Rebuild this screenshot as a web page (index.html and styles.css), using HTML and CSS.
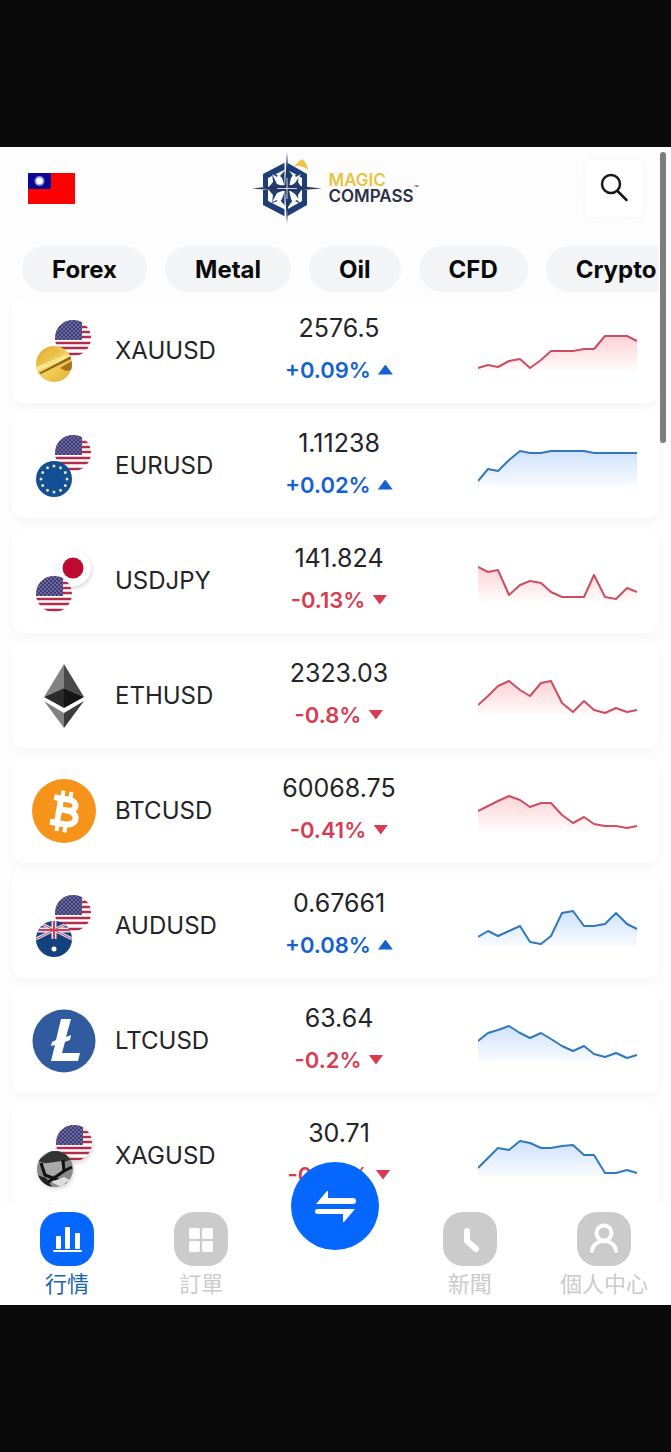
FILE: index.html
```html
<!DOCTYPE html>
<html lang="zh-Hant">
<head>
  <meta charset="UTF-8">
  <meta name="viewport" content="width=device-width, initial-scale=1">
  <title>Magic Compass</title>
  <link rel="stylesheet" href="styles.css">
</head>
<body>

  <!-- Shared icons -->
  <svg class="sprite" aria-hidden="true">
    <defs>
      <linearGradient id="fillRed" gradientUnits="userSpaceOnUse" x1="0" y1="12" x2="0" y2="50">
        <stop offset="0" stop-color="#f5455c" stop-opacity="0.26"/>
        <stop offset="1" stop-color="#f5455c" stop-opacity="0.02"/>
      </linearGradient>
      <linearGradient id="fillBlue" gradientUnits="userSpaceOnUse" x1="0" y1="12" x2="0" y2="50">
        <stop offset="0" stop-color="#2b7df0" stop-opacity="0.24"/>
        <stop offset="1" stop-color="#2b7df0" stop-opacity="0.03"/>
      </linearGradient>
      <linearGradient id="gold" x1="0" y1="0" x2="1" y2="1">
        <stop offset="0" stop-color="#dba52c"/>
        <stop offset="0.5" stop-color="#f3cf5c"/>
        <stop offset="1" stop-color="#e3ac30"/>
      </linearGradient>
      <clipPath id="round"><circle cx="18" cy="18" r="18"/></clipPath>
      <pattern id="stars" width="4" height="4" patternUnits="userSpaceOnUse">
        <rect width="4" height="4" fill="#3f3b78"/>
        <circle cx="1" cy="1" r="0.7" fill="#b9b7d6"/>
        <circle cx="3" cy="3" r="0.7" fill="#b9b7d6"/>
      </pattern>
    </defs>
    <symbol id="us" viewBox="0 0 36 36">
      <g clip-path="url(#round)">
        <rect width="36" height="36" fill="#fff"/>
        <path d="M0 2h36M0 7h36M0 12h36M0 17h36M0 23h36M0 28h36M0 34h36" stroke="#b32c4b" stroke-width="2.500"/>
        <rect width="27" height="20" fill="url(#stars)"/>
      </g>
    </symbol>
    <symbol id="eu" viewBox="0 0 36 36">
      <circle cx="18" cy="18" r="18" fill="#134f96"/>
      <g fill="#e6e3a0">
        <circle cx="18" cy="5" r="1.5"/><circle cx="24.5" cy="6.7" r="1.5"/><circle cx="29.3" cy="11.5" r="1.5"/>
        <circle cx="31" cy="18" r="1.5"/><circle cx="29.3" cy="24.5" r="1.5"/><circle cx="24.5" cy="29.3" r="1.5"/>
        <circle cx="18" cy="31" r="1.5"/><circle cx="11.5" cy="29.3" r="1.5"/><circle cx="6.7" cy="24.5" r="1.5"/>
        <circle cx="5" cy="18" r="1.5"/><circle cx="6.7" cy="11.5" r="1.5"/><circle cx="11.5" cy="6.7" r="1.5"/>
      </g>
    </symbol>
    <symbol id="jp" viewBox="0 0 36 36">
      <circle cx="18" cy="18" r="18" fill="#fff"/>
      <circle cx="18" cy="18" r="10.5" fill="#bd0a30"/>
    </symbol>
    <symbol id="au" viewBox="0 0 36 36">
      <g clip-path="url(#round)">
        <rect width="36" height="36" fill="#14427e"/>
        <path d="M0 0l36 18M36 0L0 18" stroke="#e9e4ee" stroke-width="3"/>
        <path d="M18 0v18M0 9h36" stroke="#e9e4ee" stroke-width="5"/>
        <path d="M0 0l36 18M36 0L0 18" stroke="#c8405c" stroke-width="1"/>
        <path d="M18 0v18M0 9h36" stroke="#c8405c" stroke-width="2"/>
        <circle cx="18" cy="28" r="2.500" fill="#fff"/>
      </g>
    </symbol>
    <symbol id="xau" viewBox="0 0 36 36">
      <g clip-path="url(#round)">
        <rect width="36" height="36" fill="url(#gold)"/>
        <path d="M0 21L36 6v4L0 26z" fill="#fbe58d"/>
        <path d="M3 27L35 10v3L5 28z" fill="#8f6714"/>
        <path d="M24 22l12-7v9l-6 1z" fill="#a4731a"/>
        <path d="M6 8l14-6 4 4-15 7z" fill="#e9bd48"/>
      </g>
    </symbol>
    <symbol id="xag" viewBox="0 0 36 36">
      <g clip-path="url(#round)">
        <rect width="36" height="36" fill="#8a8a8a"/>
        <path d="M0 10L14 0h16l6 8-9 3-19 1z" fill="#333"/>
        <path d="M6 13l18-3 2 12-17 4z" fill="#a9a9a9"/>
        <path d="M4 12l4 12 26 10M26 9l1 11-17 12M27 20l8-4" stroke="#111" stroke-width="3" fill="none"/>
        <path d="M14 31l13-5 6 3-9 7z" fill="#dcdcdc"/>
        <path d="M0 24l9 3 6 9H2z" fill="#222"/>
      </g>
    </symbol>
  </svg>

  <div class="app">

    <header class="header">
      <button class="lang" type="button" aria-label="Language">
        <svg width="47" height="31" viewBox="0 0 47 31">
          <rect width="47" height="31" fill="#fe0000"/>
          <rect width="23" height="16" fill="#0a0794"/>
          <circle cx="11.500" cy="8" r="5" fill="#8f8fdc"/>
          <circle cx="11.500" cy="8" r="3.300" fill="#fff"/>
        </svg>
      </button>

      <a class="brand" href="#" aria-label="Magic Compass">
        <svg width="70" height="72" viewBox="0 0 70 72">
          <path d="M34 10L11 22v31l23 12 21-12V22z" fill="#1f3d77"/>
          <path d="M34 17L16 26v23l18 9 16-9V26z" fill="#fff"/>
          <g fill="#1f3d77">
            <path d="M35 36H16l5-6-1-9 8 3 6-7z"/>
            <path d="M35 36h15l-4-6 1-8-6 2-5-7z"/>
            <path d="M35 37H16l5 6-1 8 8-3 6 7z"/>
            <path d="M35 37h15l-4 6 1 8-6-3-5 7z"/>
          </g>
          <path d="M33 35l-8-3-5-10 5 3 1-3 4 4zM37 35l6-4 6-9-5 3-2-3-3 4zM33 38l-8 3-5 9 5-2 1 4 4-5zM37 38l6 4 6 8-5-2-2 4-3-5z" fill="#fff"/>
          <path d="M34 8v57M8 36.500h54" stroke="#fff" stroke-width="3"/>
          <path d="M35 0l2 33 33 3.500L37 39l-2 33-2-33-33-2.500L33 33z" fill="#24365f"/>
          <path d="M35 26v21M25 36.500h20" stroke="#fff" stroke-width="0.800"/>
          <path d="M42 14l8-7q5 4 6 11-6-5-14-4z" fill="#f0c243"/>
        </svg>
        <span class="brand-name">
          <span class="brand-magic">MAGIC</span>
          <span class="brand-compass">COMPASS</span>
        </span>
        <span class="tm">™</span>
      </a>

      <button class="search" type="button" aria-label="Search">
        <svg width="30" height="30" viewBox="0 0 30 30" fill="none" stroke="#17181a" stroke-width="2.500" stroke-linecap="round">
          <circle cx="11" cy="11" r="9"/>
          <path d="M17.500 18l9 9"/>
        </svg>
      </button>
    </header>

    <nav class="chips">
      <button class="chip" type="button">Forex</button>
      <button class="chip" type="button">Metal</button>
      <button class="chip" type="button">Oil</button>
      <button class="chip" type="button">CFD</button>
      <button class="chip" type="button">Crypto</button>
    </nav>

    <!-- Quotes -->
    <ul class="quotes">
      <li class="quote up">
        <svg class="coin" viewBox="0 0 64 64">
          <use href="#us" x="23" y="1" width="36" height="36"/>
          <use href="#xau" x="4" y="27" width="36" height="36"/>
        </svg>
        <span class="symbol">XAUUSD</span>
        <div class="rate">
          <span class="price">2576.5</span>
          <span class="change">+0.09%</span>
        </div>
        <svg class="chart red" viewBox="0 0 160 60">
          <path d="M0 50V47L10 44 20 46 31 40 42 38 52 47 63 39 73 30H95L106 28H116L127 15H149L159 20V50z"/>
          <polyline points="0,47 10,44 20,46 31,40 42,38 52,47 63,39 73,30 84,30 95,30 106,28 116,28 127,15 138,15 149,15 159,20"/>
        </svg>
      </li>
      <li class="quote up">
        <svg class="coin" viewBox="0 0 64 64">
          <use href="#us" x="23" y="1" width="36" height="36"/>
          <use href="#eu" x="4" y="27" width="36" height="36"/>
        </svg>
        <span class="symbol">EURUSD</span>
        <div class="rate">
          <span class="price">1.11238</span>
          <span class="change">+0.02%</span>
        </div>
        <svg class="chart blue" viewBox="0 0 160 60">
          <path d="M0 50V45L10 33 20 35 31 24 42 15 52 17H63L73 15H106L116 17H159V50z"/>
          <polyline points="0,45 10,33 20,35 31,24 42,15 52,17 63,17 73,15 106,15 116,17 159,17"/>
        </svg>
      </li>
      <li class="quote down">
        <svg class="coin" viewBox="0 0 64 64">
          <use class="lifted" href="#jp" x="23" y="1" width="36" height="36"/>
          <use href="#us" x="4" y="27" width="36" height="36"/>
        </svg>
        <span class="symbol">USDJPY</span>
        <div class="rate">
          <span class="price">141.824</span>
          <span class="change">-0.13%</span>
        </div>
        <svg class="chart red" viewBox="0 0 160 60">
          <path d="M0 50V16L10 21 20 19 31 44 42 34 52 30 63 32 73 41 84 46H106L116 24 127 46 138 48 149 37 159 41V50z"/>
          <polyline points="0,16 10,21 20,19 31,44 42,34 52,30 63,32 73,41 84,46 106,46 116,24 127,46 138,48 149,37 159,41"/>
        </svg>
      </li>
      <li class="quote down">
        <svg class="coin" viewBox="0 0 64 64">
          <path d="M32 0L12 33l20-9z" fill="#828282"/>
          <path d="M32 0l20 33-20-9z" fill="#4a4a4a"/>
          <path d="M12 33l20-9v20z" fill="#2b2b2b"/>
          <path d="M52 33l-20-9v20z" fill="#151515"/>
          <path d="M12 37l20 12v15z" fill="#828282"/>
          <path d="M52 37L32 49v15z" fill="#3c3c3c"/>
        </svg>
        <span class="symbol">ETHUSD</span>
        <div class="rate">
          <span class="price">2323.03</span>
          <span class="change">-0.8%</span>
        </div>
        <svg class="chart red" viewBox="0 0 160 60">
          <path d="M0 50V39L10 30 20 20 31 15 42 24 52 30 63 17 73 15 84 37 95 46 106 35 116 44 127 47 138 42 149 46 159 44V50z"/>
          <polyline points="0,39 10,30 20,20 31,15 42,24 52,30 63,17 73,15 84,37 95,46 106,35 116,44 127,47 138,42 149,46 159,44"/>
        </svg>
      </li>
      <li class="quote down">
        <svg class="coin" viewBox="0 0 64 64">
          <circle cx="32" cy="32" r="32" fill="#f6931b"/>
          <g transform="rotate(10 32 32)" fill="none" stroke="#fff">
            <path d="M20 20h15c10 0 10 11 0 11H26M35 31c13 0 13 14 0 14H20M27 20v25" stroke-width="6"/>
            <path d="M28 12v7M36 12v7M28 46v7M36 46v7" stroke-width="4"/>
          </g>
        </svg>
        <span class="symbol">BTCUSD</span>
        <div class="rate">
          <span class="price">60068.75</span>
          <span class="change">-0.41%</span>
        </div>
        <svg class="chart red" viewBox="0 0 160 60">
          <path d="M0 50V30L10 25 20 20 31 15 42 19 52 26 63 22H73L84 34 95 42 106 36 116 43 127 45H138L149 47 159 45V50z"/>
          <polyline points="0,30 10,25 20,20 31,15 42,19 52,26 63,22 73,22 84,34 95,42 106,36 116,43 127,45 138,45 149,47 159,45"/>
        </svg>
      </li>
      <li class="quote up">
        <svg class="coin" viewBox="0 0 64 64">
          <use href="#us" x="23" y="1" width="36" height="36"/>
          <use href="#au" x="4" y="27" width="36" height="36"/>
        </svg>
        <span class="symbol">AUDUSD</span>
        <div class="rate">
          <span class="price">0.67661</span>
          <span class="change">+0.08%</span>
        </div>
        <svg class="chart blue" viewBox="0 0 160 60">
          <path d="M0 50V41L10 35 20 40 31 35 42 30 52 46 63 48 73 40 84 17 95 15 106 30H116L127 28 138 17 149 28 159 33V50z"/>
          <polyline points="0,41 10,35 20,40 31,35 42,30 52,46 63,48 73,40 84,17 95,15 106,30 116,30 127,28 138,17 149,28 159,33"/>
        </svg>
      </li>
      <li class="quote down">
        <svg class="coin" viewBox="0 0 64 64">
          <circle cx="32" cy="32" r="31.500" fill="#305b9f"/>
          <path d="M29 10h10l-5 18 5-2-1 5-5 2-3 11h18l-2 8H19l4-16-4 1 1-4 4-2z" fill="#fff"/>
        </svg>
        <span class="symbol">LTCUSD</span>
        <div class="rate">
          <span class="price">63.64</span>
          <span class="change">-0.2%</span>
        </div>
        <svg class="chart blue" viewBox="0 0 160 60">
          <path d="M0 50V30L10 22 20 19 31 15 42 22 52 27 63 22 73 28 84 35 95 40 106 35 116 43 127 46 138 42 149 47 159 44V50z"/>
          <polyline points="0,30 10,22 20,19 31,15 42,22 52,27 63,22 73,28 84,35 95,40 106,35 116,43 127,46 138,42 149,47 159,44"/>
        </svg>
      </li>
      <li class="quote down">
        <svg class="coin" viewBox="0 0 64 64">
          <use class="lifted" href="#us" x="24" y="1" width="36" height="36"/>
          <use class="lifted" href="#xag" x="5" y="27" width="36" height="36"/>
        </svg>
        <span class="symbol">XAGUSD</span>
        <div class="rate">
          <span class="price">30.71</span>
          <span class="change">-0.26%</span>
        </div>
        <svg class="chart blue" viewBox="0 0 160 60">
          <path d="M0 50V42L10 32 20 22 31 24 42 15 52 17 63 22H73L84 20 95 19 106 29H116L127 47H138L149 44 159 47V50z"/>
          <polyline points="0,42 10,32 20,22 31,24 42,15 52,17 63,22 73,22 84,20 95,19 106,29 116,29 127,47 138,47 149,44 159,47"/>
        </svg>
      </li>
    </ul>

    <!-- Bottom tabs -->
    <nav class="tabs">
      <a class="tab active" href="#">
        <svg class="tab-icon" viewBox="0 0 54 54" fill="#fff">
          <rect x="16" y="24" width="5" height="13" rx="1"/>
          <rect x="25" y="15" width="5" height="22" rx="1"/>
          <rect x="35" y="21" width="5" height="16" rx="1"/>
          <rect x="13" y="38" width="29" height="2" rx="1"/>
        </svg>
        行情
      </a>
      <a class="tab" href="#">
        <svg class="tab-icon" viewBox="0 0 54 54" fill="#fff">
          <rect x="15" y="16" width="11" height="11" rx="2"/>
          <rect x="28" y="16" width="11" height="11" rx="2"/>
          <rect x="15" y="29" width="11" height="11" rx="2"/>
          <rect x="28" y="29" width="11" height="11" rx="2"/>
        </svg>
        訂單
      </a>
      <div class="tab">
        <button class="trade" type="button" aria-label="Trade">
          <svg width="88" height="88" viewBox="0 0 88 88" fill="#fff">
            <path d="M25 42L36 29q1-1 1 1v6h25q3 0 3 3t-3 3z"/>
            <path d="M64 47L53 60q-1 1-1-1v-7H27q-3 0-3-2.500t3-2.500z"/>
          </svg>
        </button>
      </div>
      <a class="tab" href="#">
        <svg class="tab-icon" viewBox="0 0 54 54" fill="none" stroke="#fff" stroke-width="6" stroke-linecap="round" stroke-linejoin="round">
          <path d="M24 19v10l9 8"/>
        </svg>
        新聞
      </a>
      <a class="tab" href="#">
        <svg class="tab-icon" viewBox="0 0 54 54" fill="none" stroke="#fff" stroke-width="4" stroke-linecap="round">
          <circle cx="27" cy="21" r="7.500"/>
          <path d="M15 39c1-7 6-10 12-10s11 3 12 10"/>
        </svg>
        個人中心
      </a>
    </nav>

    <div class="scrollbar"></div>
  </div>

</body>
</html>
```
FILE: styles.css
```css
:root {
  --up: #1462cf;
  --down: #d63d52;
  --primary: #0567fe;
  --muted: #cbcbcb;
  --text: #232427;
}

* {
  box-sizing: border-box;
  margin: 0;
  padding: 0;
}

body {
  display: flex;
  flex-direction: column;
  height: 100vh;
  padding: 147px 0;
  background: #0a0a0a;
  color: var(--text);
  font-family: Inter, "Noto Sans CJK TC", sans-serif;
}

button {
  border: 0;
  background: none;
  font: inherit;
  color: inherit;
  cursor: pointer;
}

svg {
  display: block;
}

.sprite {
  position: absolute;
  width: 0;
  height: 0;
}

.app {
  position: relative;
  display: flex;
  flex-direction: column;
  flex: 1;
  min-height: 0;
  background: #fdfdfd;
}

.header {
  display: grid;
  grid-template-columns: 1fr auto 1fr;
  align-items: center;
  padding: 5px 28px 0;
}

.lang {
  justify-self: start;
}

.brand {
  display: flex;
  align-items: center;
  text-decoration: none;
}

.brand-name {
  display: flex;
  flex-direction: column;
  margin-left: 6px;
  font-size: 17px;
  font-weight: 600;
  line-height: 16px;
}

.brand-magic {
  color: #e9c244;
}

.brand-compass {
  color: #2a3047;
}

.tm {
  color: #2a3047;
  font-size: 8px;
  line-height: 8px;
}

.search {
  justify-self: end;
  display: grid;
  place-items: center;
  width: 57px;
  height: 57px;
  border-radius: 6px;
  background: #fff;
  box-shadow: 0 0 8px rgba(0, 0, 0, 0.04);
}

.chips {
  display: flex;
  gap: 18px;
  margin: 22px 12px 0 0;
  padding-left: 22px;
  overflow: hidden;
}

.chip {
  flex: none;
  height: 46px;
  padding: 0 30px;
  border-radius: 23px;
  background: #f3f4f6;
  color: #0a0a0b;
  font-size: 24px;
  font-weight: 700;
}

.quotes {
  display: flex;
  flex-direction: column;
  gap: 10px;
  flex: 1;
  min-height: 0;
  padding: 6px 12px 0;
  overflow: hidden;
  list-style: none;
}

.quote {
  display: grid;
  grid-template-columns: 64px 120px 1fr 195px;
  gap: 19px;
  align-items: center;
  flex: none;
  height: 105px;
  padding: 0 21px 0 20px;
  border-radius: 12px;
  background: #fff;
  box-shadow: 0 4px 10px rgba(0, 0, 0, 0.03);
}

.coin {
  width: 64px;
  height: 64px;
  overflow: visible;
}

.lifted {
  filter: drop-shadow(1px 2px 2px rgba(0, 0, 0, 0.15));
}

.symbol {
  font-size: 24px;
}

.rate {
  display: flex;
  flex-direction: column;
  align-items: center;
  padding-bottom: 4px;
}

.price {
  font-size: 25px;
  line-height: 42px;
}

.change {
  display: flex;
  align-items: center;
  gap: 7px;
  font-size: 22px;
  font-weight: 600;
  line-height: 42px;
}

.change::after {
  content: "";
  width: 15px;
  height: 10px;
  background: currentColor;
}

.up .change {
  color: var(--up);
}

.up .change::after {
  clip-path: polygon(50% 0, 100% 100%, 0 100%);
}

.down .change {
  color: var(--down);
}

.down .change::after {
  clip-path: polygon(0 0, 100% 0, 50% 100%);
}

.chart {
  justify-self: end;
  width: 160px;
  height: 60px;
}

.chart polyline {
  fill: none;
  stroke-width: 2;
  stroke-linejoin: round;
}

.red path {
  fill: url(#fillRed);
}

.red polyline {
  stroke: #cb4e61;
}

.blue path {
  fill: url(#fillBlue);
}

.blue polyline {
  stroke: #3179bd;
}

.tabs {
  display: grid;
  grid-template-columns: repeat(5, 1fr);
  height: 103px;
  padding-top: 10px;
  background: #fff;
}

.tab {
  position: relative;
  display: flex;
  flex-direction: column;
  align-items: center;
  color: var(--muted);
  font-size: 22px;
  font-weight: 400;
  line-height: 36px;
  text-decoration: none;
}

.tab-icon {
  width: 54px;
  height: 54px;
  border-radius: 20px;
  background: var(--muted);
}

.tab.active {
  color: #1c66ae;
}

.active .tab-icon {
  background: var(--primary);
}

.trade {
  position: absolute;
  top: -50px;
  width: 88px;
  height: 88px;
  border-radius: 50%;
  background: var(--primary);
}

.scrollbar {
  position: absolute;
  top: 5px;
  right: 5px;
  width: 6px;
  height: 291px;
  border-radius: 3px;
  background: #7d7d7d;
}
```
